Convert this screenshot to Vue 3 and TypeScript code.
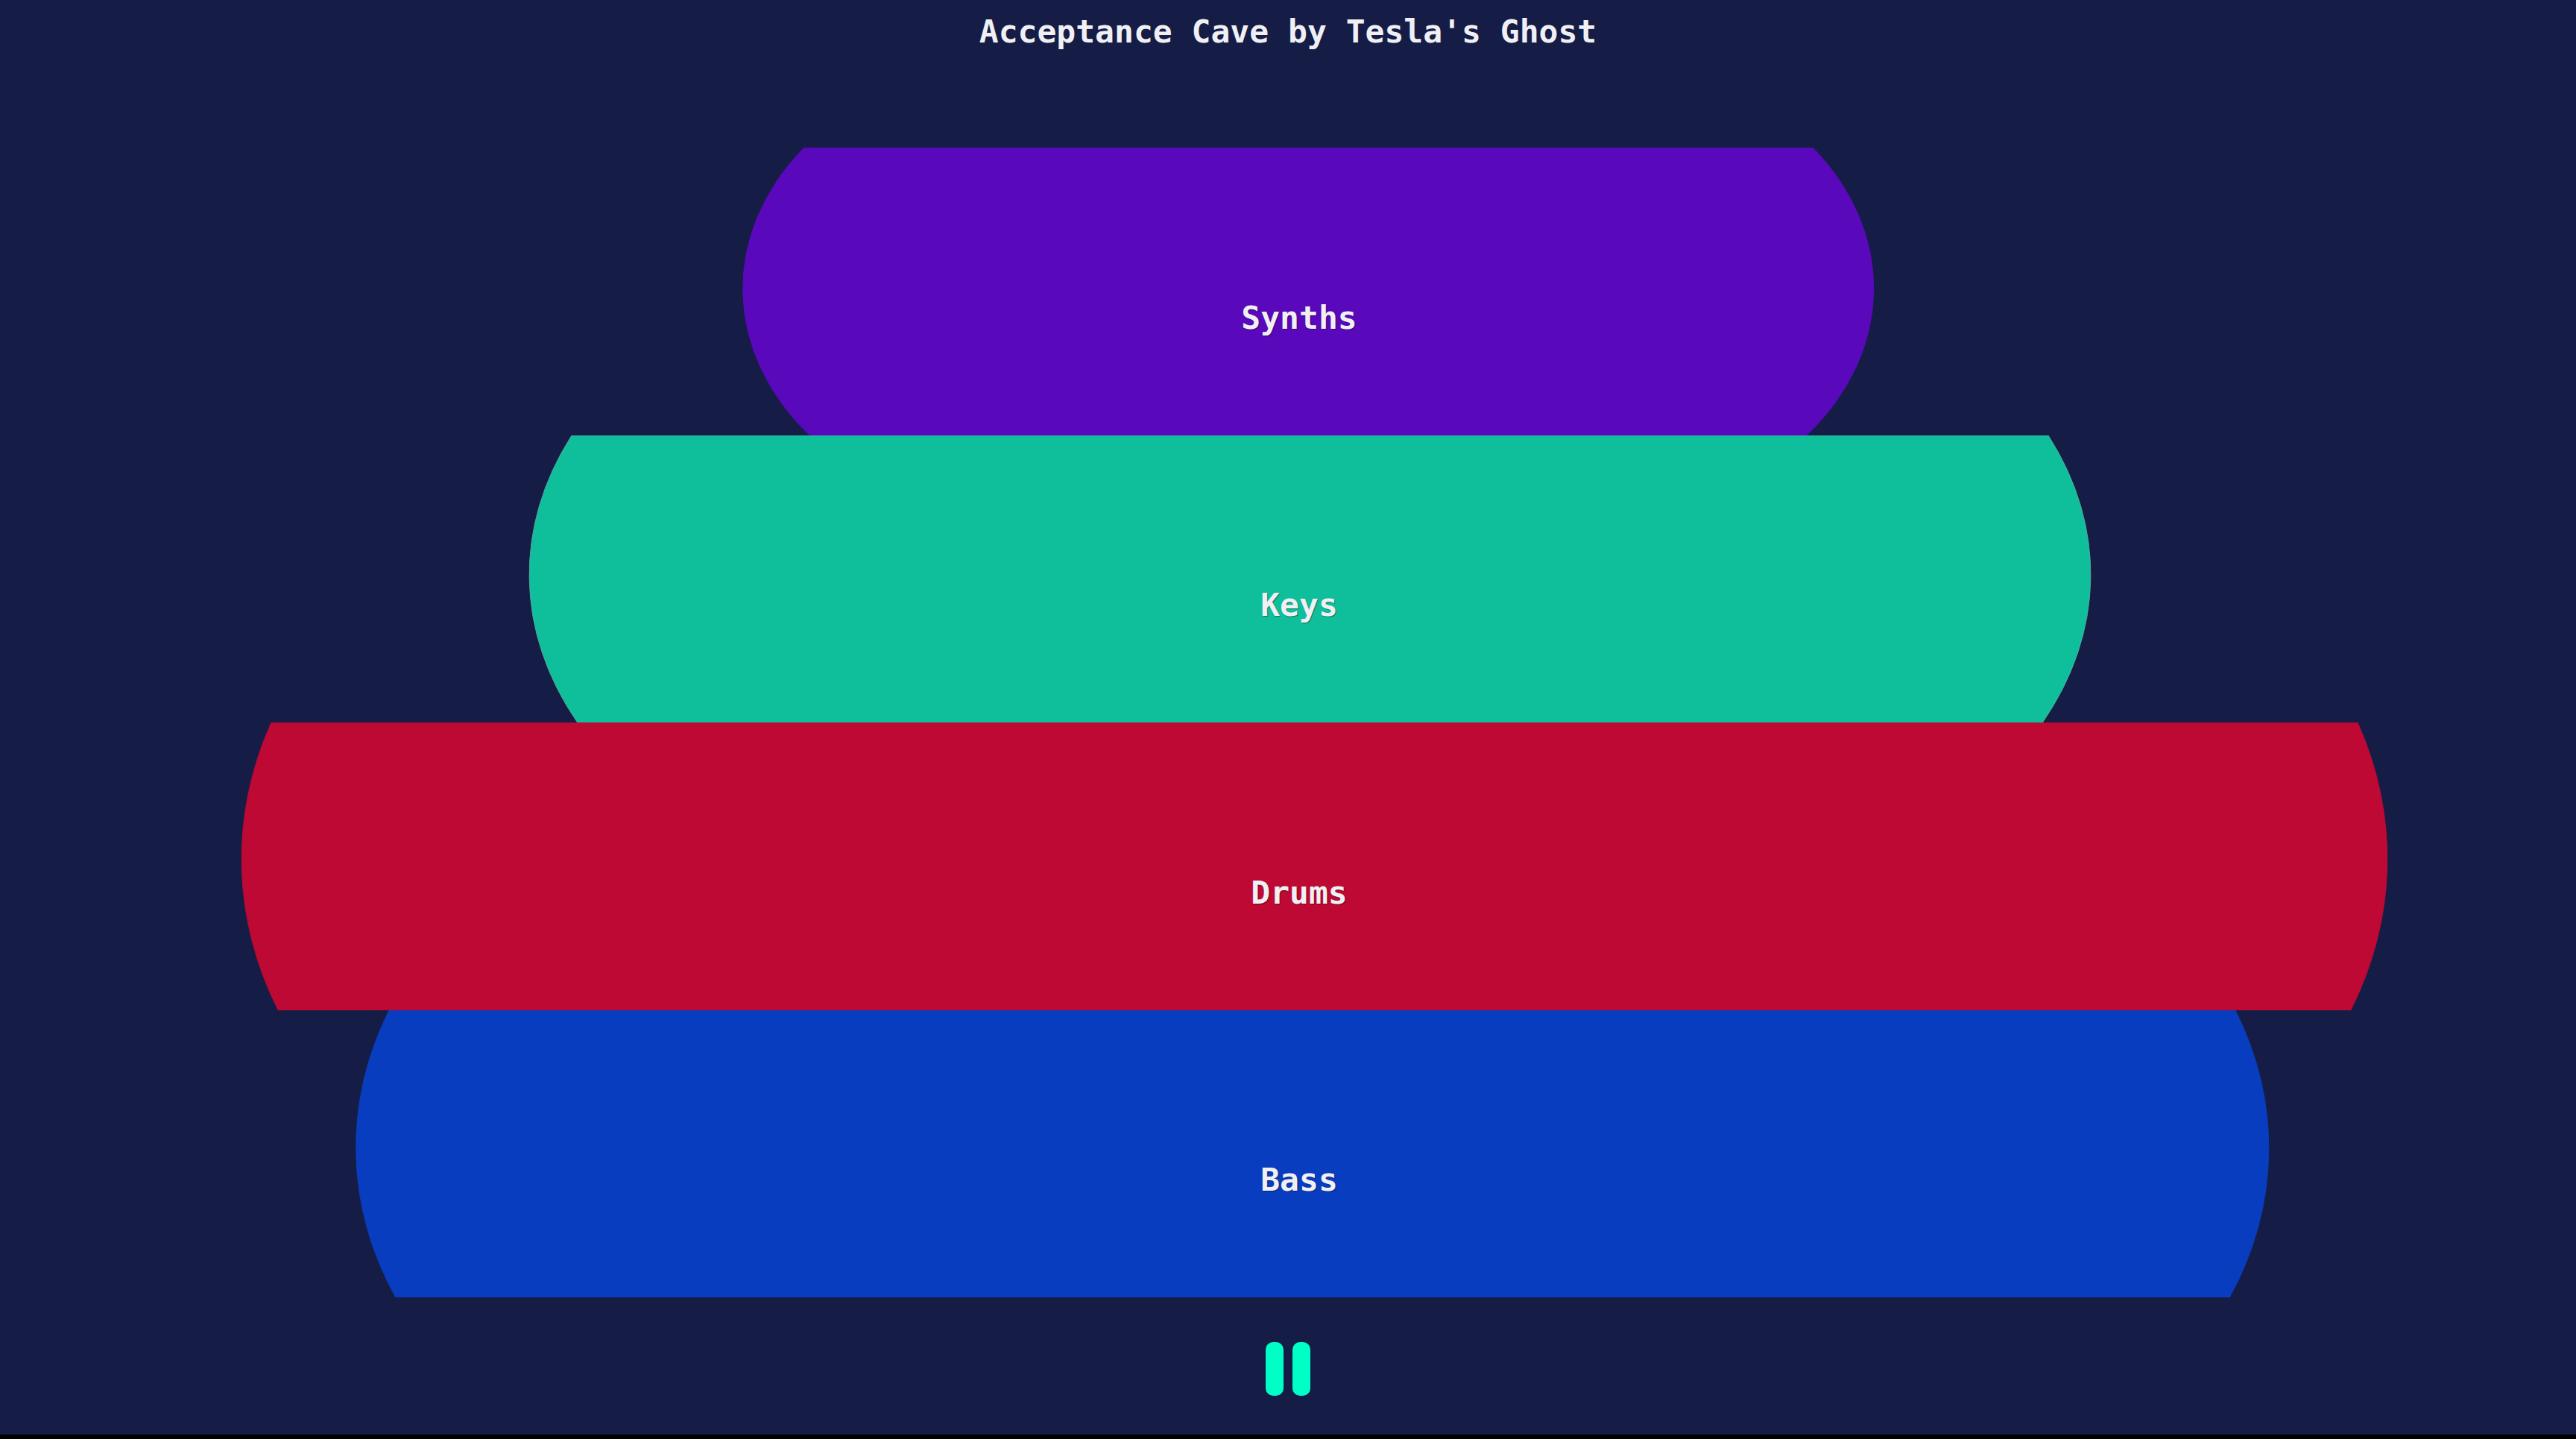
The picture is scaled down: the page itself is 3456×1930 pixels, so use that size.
<script setup lang="ts">
import { ref } from 'vue'

interface Stem {
  name: string
  color: string
  edge: string
  shape: string
}

const stems: Stem[] = [
  {
    name: 'Synths',
    color: '#5a08bc',
    edge: '#5a08bc',
    shape: 'M1079 0H2432A400 312 0 0 1 2424 386H1086A400 312 0 0 1 1079 0Z',
  },
  {
    name: 'Keys',
    color: '#0fbf9c',
    edge: '#4fa99a',
    shape: 'M767 0H2748A600 440 0 0 1 2740 386H775A600 440 0 0 1 767 0Z',
  },
  {
    name: 'Drums',
    color: '#bd0934',
    edge: '#bd0934',
    shape: 'M364 0H3163A700 552 0 0 1 3154 386H373A700 552 0 0 1 364 0Z',
  },
  {
    name: 'Bass',
    color: '#093dbf',
    edge: '#093dbf',
    shape: 'M522 0H2999A650 508 0 0 1 2991 386H531A650 508 0 0 1 522 0Z',
  },
]

const playing = ref(true)
</script>

<template>
  <main class="player">
    <header class="header">
      <h1 class="title">Acceptance Cave by Tesla's Ghost</h1>
    </header>

    <section class="stems">
      <button v-for="stem in stems" :key="stem.name" type="button" class="stem">
        <svg class="shape" viewBox="0 0 3456 386" preserveAspectRatio="none" aria-hidden="true">
          <path :d="stem.shape" :fill="stem.color" :stroke="stem.edge" stroke-width="1" />
        </svg>
        <span class="label">{{ stem.name }}</span>
      </button>
    </section>

    <footer class="footer">
      <button
        type="button"
        class="toggle"
        :aria-label="playing ? 'Pause' : 'Play'"
        @click="playing = !playing"
      >
        <svg width="60" height="72" viewBox="0 0 60 72" fill="#00ffc6" aria-hidden="true">
          <template v-if="playing">
            <rect width="24" height="72" rx="10" />
            <rect x="36" width="24" height="72" rx="10" />
          </template>
          <path v-else d="M4 2L58 36L4 70Z" />
        </svg>
      </button>
    </footer>
  </main>
</template>

<style>
body {
  margin: 0;
  background: #000;
}
</style>

<style scoped>
.player {
  box-sizing: border-box;
  display: flex;
  flex-direction: column;
  min-height: 100vh;
  border-bottom: 6px solid #000;
  background: #151d46;
  color: #f0f0f4;
  font-family: 'DejaVu Sans Mono', 'Liberation Mono', monospace;
  font-size: 43px;
  font-weight: 700;
  line-height: 52px;
}

.header {
  box-sizing: border-box;
  height: 198px;
  padding-top: 16px;
  text-align: center;
}

.title {
  margin: 0;
  font: inherit;
}

.stems {
  display: flex;
  flex: 1;
  flex-direction: column;
}

.stem {
  position: relative;
  display: flex;
  flex: 1;
  align-items: center;
  justify-content: center;
  padding: 70px 0 0 30px;
  border: 0;
  background: none;
  color: inherit;
  font: inherit;
  cursor: pointer;
}

.shape {
  position: absolute;
  inset: 0;
  width: 100%;
  height: 100%;
}

.label {
  position: relative;
  text-shadow: 1px 1px 1px rgb(0 0 0 / 40%);
}

.footer {
  box-sizing: border-box;
  display: flex;
  justify-content: center;
  align-items: flex-start;
  height: 184px;
  padding-top: 60px;
}

.toggle {
  display: flex;
  padding: 0;
  border: 0;
  background: none;
  cursor: pointer;
}
</style>
